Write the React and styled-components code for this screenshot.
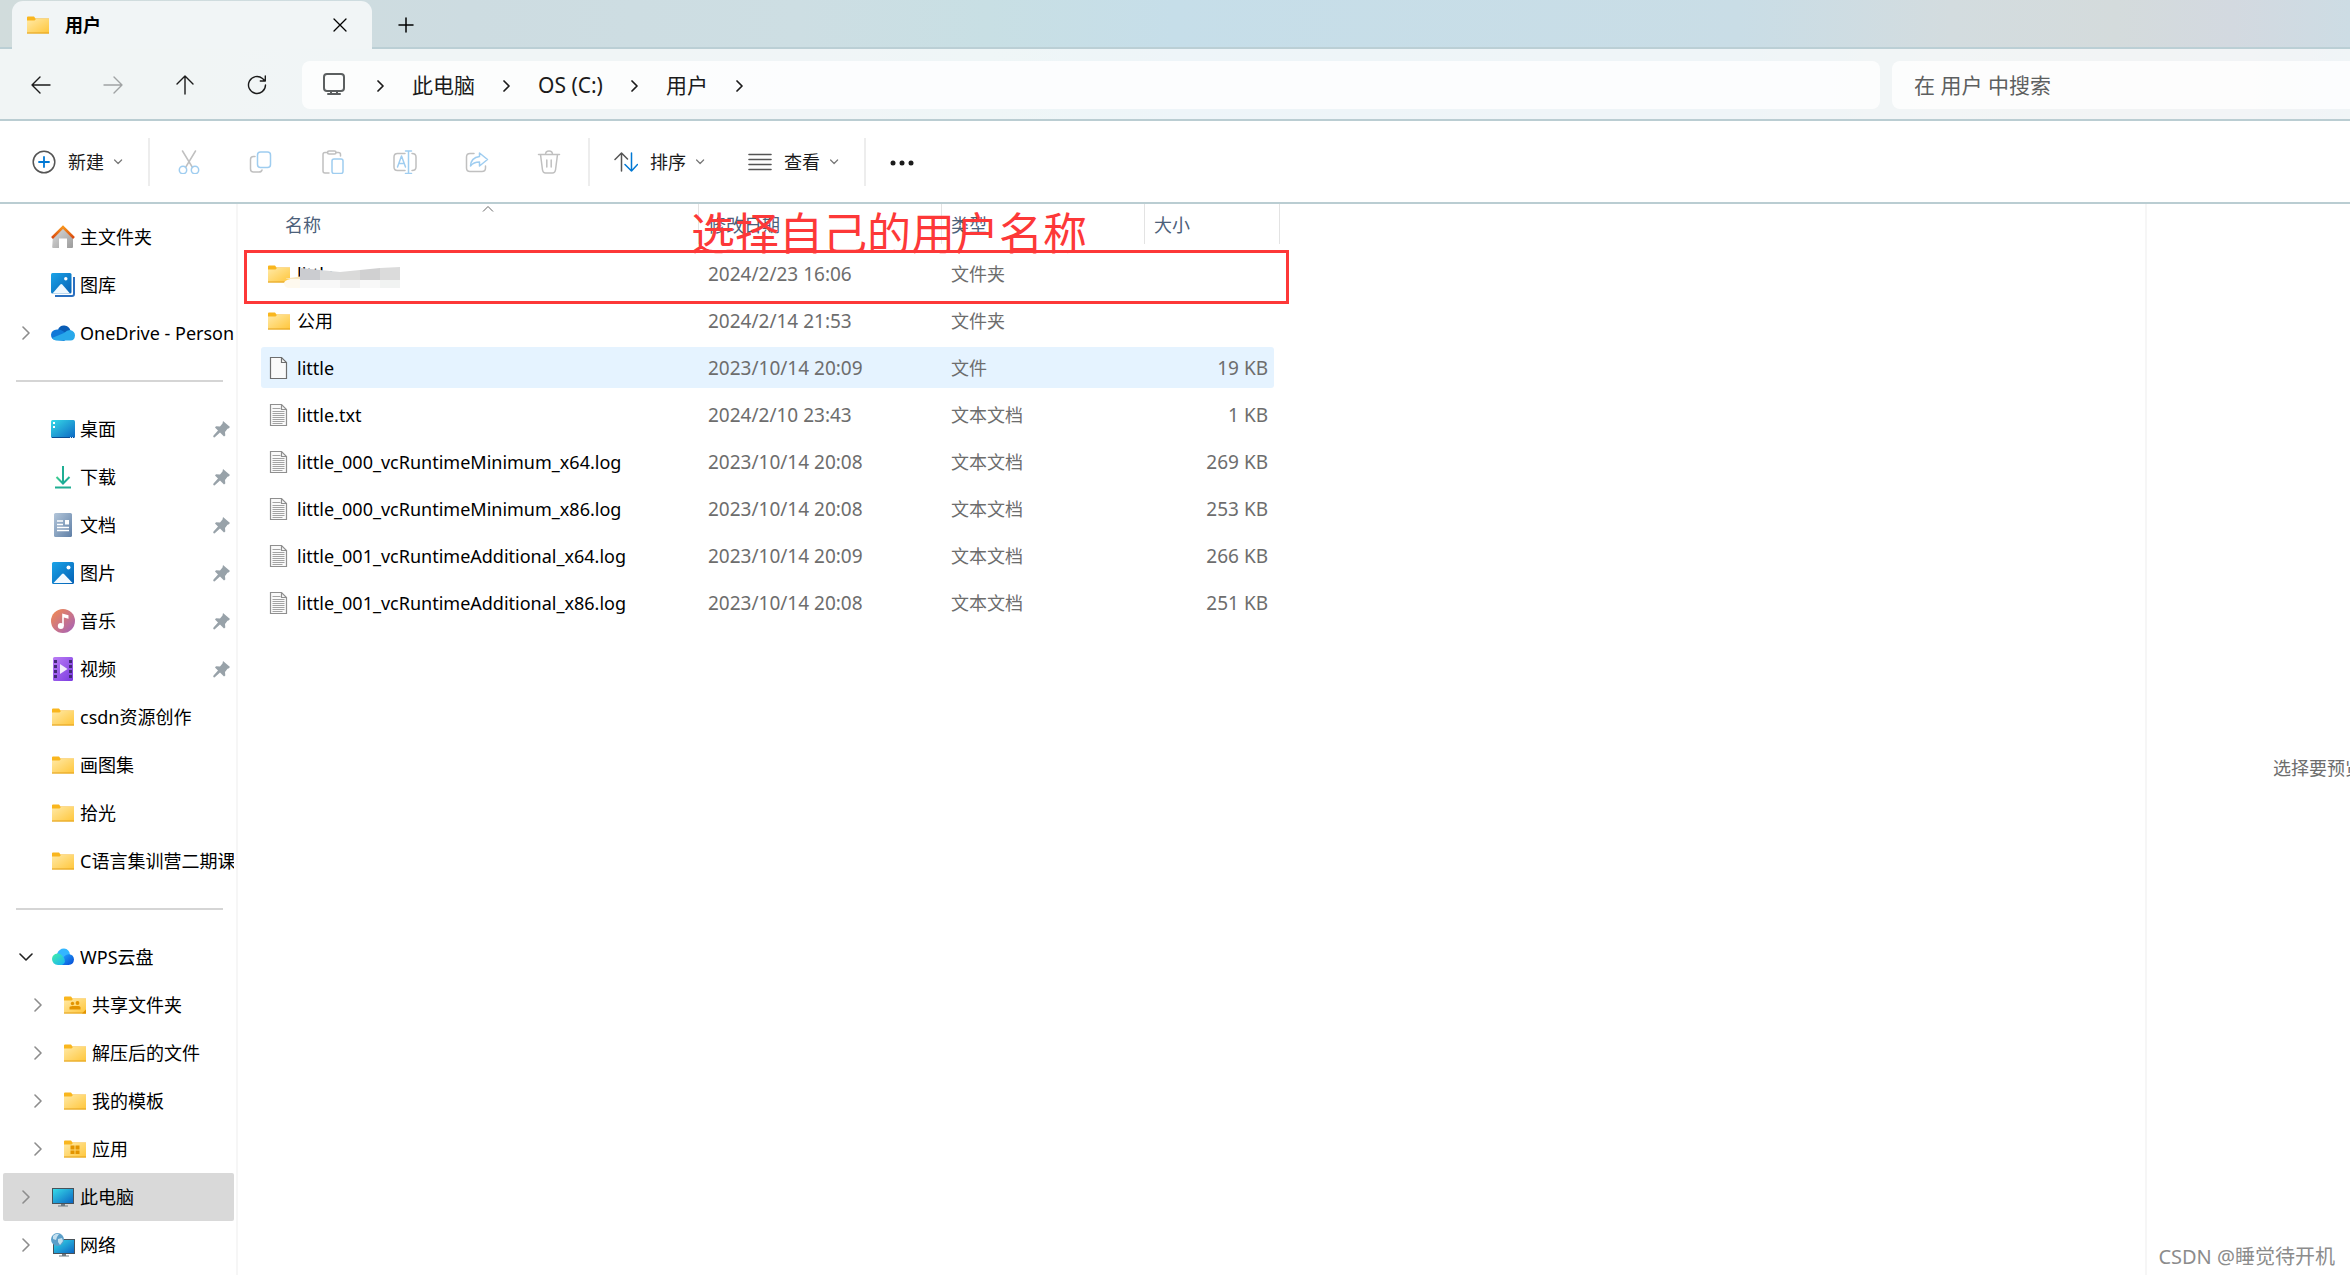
import { useState } from "react";
import styled, { createGlobalStyle, css } from "styled-components";

const GlobalStyle = createGlobalStyle`
  * {
    box-sizing: border-box;
  }

  body {
    margin: 0;
    background: #fff;
    color: #000;
    font: 18px/24px "Noto Sans", "Noto Sans CJK SC", sans-serif;
    overflow: hidden;
  }

  button, input {
    font: inherit;
    color: inherit;
    border: 0;
    padding: 0;
    background: none;
  }

  a {
    color: inherit;
    text-decoration: none;
  }

  svg {
    display: block;
    flex-shrink: 0;
  }
`;

const Window = styled.div`
  position: relative;
  display: flex;
  flex-direction: column;
  min-height: 100vh;
  overflow: hidden;
`;

const Chrome = styled.header`
  background: linear-gradient(
    90deg,
    #d1dcdc 0%,
    #cddce1 20%,
    #cddee3 34%,
    #c8dfe4 42%,
    #c6dee9 50%,
    #c9dde6 74%,
    #d3dcdf 83%,
    #d4dbdc 90%,
    #d3d9e0 95%,
    #cddce4 100%
  );
`;

const TabStrip = styled.div`
  display: flex;
  height: 49px;
  padding: 1px 0 0 12px;
  box-shadow: inset 0 -2px #bbcfd5;
`;

const Tab = styled.div`
  display: flex;
  align-items: center;
  width: 360px;
  padding: 0 24px 0 14px;
  border-radius: 11px 11px 0 0;
  background: #f1f5f6;
  font-weight: 700;

  > svg {
    margin-right: 15px;
  }

  button {
    margin-left: auto;
  }
`;

const NewTab = styled.button`
  width: 68px;
  display: grid;
  place-items: center;
`;

const NavBar = styled.nav`
  display: flex;
  align-items: center;
  height: 72px;
  padding: 2px 0 0 5px;
  background: rgba(255, 255, 255, 0.7);
  border-bottom: 2px solid #bacdd2;
`;

const IconButton = styled.button`
  display: grid;
  place-items: center;
  width: 72px;
  height: 48px;
  color: #1b1b1b;

  &:disabled {
    color: #a0a3a4;
  }
`;

const AddressBar = styled.ol`
  flex: 1;
  display: flex;
  align-items: center;
  gap: 28px;
  height: 48px;
  margin: 0 12px 0 9px;
  padding: 0 19px;
  border-radius: 8px;
  background: rgba(255, 255, 255, 0.8);
  color: #1b1b1b;
  list-style: none;
  font-size: 21px;

  li {
    display: flex;
    align-items: center;
    gap: 28px;
  }
`;

const Search = styled.input`
  width: 458px;
  height: 48px;
  padding: 0 22px;
  border-radius: 8px 0 0 8px;
  background: rgba(255, 255, 255, 0.8);
  font-size: 21px;
  outline: none;

  &::placeholder {
    color: #5d5f60;
    opacity: 1;
  }
`;

const Toolbar = styled.div`
  display: flex;
  align-items: center;
  height: 83px;
  padding-left: 11px;
  border-bottom: 2px solid #bacdd2;
`;

const MenuButton = styled.button`
  display: flex;
  align-items: center;
  gap: 12px;
  height: 48px;
  padding: 0 21px;
  color: #1b1b1b;

  svg + svg {
    margin-left: -2px;
  }
`;

const Divider = styled.span`
  width: 2px;
  height: 48px;
  margin: 0 3px;
  background: #ededed;
`;

const Body = styled.div`
  flex: 1;
  display: flex;
`;

const Sidebar = styled.aside`
  width: 238px;
  flex-shrink: 0;
  padding: 9px 2px 0 3px;
  border-right: 2px solid #f6f6f6;

  ul {
    margin: 0;
    padding: 0;
    list-style: none;
  }
`;

const TreeItem = styled.a`
  display: flex;
  align-items: center;
  height: 48px;
  padding: 0 4px 0 ${(props) => (props.$nested ? "28px" : "16px")};
  border-radius: 2px;
  overflow: hidden;
  white-space: nowrap;

  ${(props) =>
    props.$active &&
    css`
      background: #d9d9d9;
    `}
`;

const TreeArrow = styled.span`
  width: 14px;
  margin-right: 18px;
`;

const TreeLabel = styled.span`
  flex: 1;
  margin-left: 5px;
  margin-right: -4px;
  overflow: hidden;
`;

const TreeRule = styled.li`
  height: 48px;
  padding: 23px 11px 0 13px;

  &::after {
    content: "";
    display: block;
    height: 2px;
    background: #d5d5d5;
  }
`;

const Files = styled.main`
  position: relative;
  flex: 1;
  min-width: 0;
`;

const FileTable = styled.table`
  display: block;
  margin-left: 23px;

  thead,
  tbody {
    display: block;
  }

  tr {
    display: grid;
    grid-template-columns: 438px 243px 203px 135px;
    width: 1019px;
  }
`;

const Heading = styled.th`
  position: relative;
  height: 40px;
  padding: 9px 0 0 ${(props) => (props.$first ? "24px" : "9px")};
  border-right: 1px solid #e3e3e3;
  color: #4c607a;
  font-weight: 400;
  text-align: left;
`;

const SortMark = styled.svg`
  position: absolute;
  top: 1px;
  left: 221px;
`;

const FileRows = styled.tbody`
  padding-top: 9px;
`;

const FileRow = styled.tr`
  && {
    width: 1013px;
    grid-template-columns: 437px 243px 203px 130px;
  }
  height: 41px;
  margin-bottom: 6px;
  border-radius: 3px;
  background: ${(props) => (props.$active ? "#e5f3ff" : "transparent")};
`;

const Cell = styled.td`
  display: flex;
  align-items: center;
  justify-content: ${(props) => (props.$right ? "flex-end" : "flex-start")};
  padding: 0 6px 0 10px;
  color: #6d6d6d;
  font-size: ${(props) => (props.$numeric ? "19px" : "18px")};
`;

const NameCell = styled(Cell)`
  position: relative;
  gap: 6px;
  padding-left: 6px;
  color: #000;
`;

const Smudge = styled.svg`
  position: absolute;
  left: 22px;
  top: 13px;
`;

const Highlight = styled.div`
  position: absolute;
  top: 46px;
  left: 6px;
  width: 1045px;
  height: 54px;
  border: 3px solid #fd3838;
`;

const Note = styled.p`
  position: absolute;
  top: 3px;
  left: 453px;
  margin: 0;
  color: #fd3838;
  font-size: 44px;
  line-height: 52px;
  white-space: nowrap;
`;

const Preview = styled.aside`
  width: 205px;
  display: flex;
  align-items: center;
  padding: 56px 0 0 126px;
  border-left: 2px solid #f6f6f6;
  color: #6d6d6d;
  white-space: nowrap;
  overflow: hidden;

  p {
    margin: 0;
  }
`;

const Watermark = styled.span`
  position: absolute;
  right: 15px;
  bottom: 4px;
  color: #8c8c8c;
  font-size: 20px;
  line-height: 28px;
  text-shadow: -1px -1px #fff;
`;

/* icons */

const Defs = () => (
  <svg width="0" height="0" style={{ position: "absolute" }} aria-hidden="true">
    <defs>
      <linearGradient id="gold" x1="0" y1="0" x2="1" y2="1">
        <stop offset="0" stopColor="#ffe9a6" />
        <stop offset="1" stopColor="#ffc63a" />
      </linearGradient>
      <linearGradient id="blue" x1="0" y1="0" x2="1" y2="1">
        <stop offset="0" stopColor="#1ba4e8" />
        <stop offset="1" stopColor="#0560b4" />
      </linearGradient>
      <linearGradient id="cyan" x1="0" y1="0" x2="1" y2="1">
        <stop offset="0" stopColor="#37dbe8" />
        <stop offset="1" stopColor="#0b66c3" />
      </linearGradient>
      <linearGradient id="roof" x1="0" y1="0" x2="0" y2="1">
        <stop offset="0" stopColor="#f7941d" />
        <stop offset="1" stopColor="#d9480f" />
      </linearGradient>
      <linearGradient id="wall" x1="0" y1="0" x2="1" y2="1">
        <stop offset="0" stopColor="#dedede" />
        <stop offset="1" stopColor="#9b9b9b" />
      </linearGradient>
      <linearGradient id="green" x1="0" y1="0" x2="1" y2="1">
        <stop offset="0" stopColor="#3fcf8e" />
        <stop offset="1" stopColor="#0a9d9a" />
      </linearGradient>
      <linearGradient id="slate" x1="0" y1="0" x2="1" y2="1">
        <stop offset="0" stopColor="#b3c6da" />
        <stop offset="1" stopColor="#5f7fa6" />
      </linearGradient>
      <linearGradient id="music" x1="0" y1="0" x2="1" y2="1">
        <stop offset="0" stopColor="#f58b4c" />
        <stop offset="1" stopColor="#a360bd" />
      </linearGradient>
      <linearGradient id="violet" x1="0" y1="0" x2="1" y2="1">
        <stop offset="0" stopColor="#bb7df5" />
        <stop offset="1" stopColor="#7a3be0" />
      </linearGradient>
      <linearGradient id="mint" x1="0" y1="0" x2="1" y2="1">
        <stop offset="0" stopColor="#43f0a8" />
        <stop offset="1" stopColor="#12a9ff" />
      </linearGradient>
      <linearGradient id="deep" x1="0" y1="0" x2="1" y2="1">
        <stop offset="0" stopColor="#22a4ff" />
        <stop offset="1" stopColor="#0649d2" />
      </linearGradient>
    </defs>
  </svg>
);

const Line = ({ size = 24, width = size, height = size, children, ...rest }) => (
  <svg
    width={width}
    height={height}
    viewBox={`0 0 ${width} ${height}`}
    fill="none"
    stroke="currentColor"
    strokeWidth="1.5"
    strokeLinecap="round"
    strokeLinejoin="round"
    aria-hidden="true"
    {...rest}
  >
    {children}
  </svg>
);

const Folder = ({ children }) => (
  <svg width="24" height="24" viewBox="0 0 24 24" aria-hidden="true">
    <path d="M1 4.500q0-1 1-1h6l1.500 2H23v14.500H1z" fill="#f9b61e" />
    <path d="M1 7.500h7.500l1.500-1.500H23v14.500H1z" fill="url(#gold)" />
    <path d="M1 20h22" stroke="#e2a11c" />
    {children}
  </svg>
);

const SharedFolder = () => (
  <Folder>
    <g fill="#e39400">
      <circle cx="9.500" cy="10.500" r="1.700" />
      <circle cx="14.500" cy="10" r="1.900" />
      <path d="M6.500 16.500v-2q0-1.500 3-1.500h6q2 0 2 1.500v2z" />
      <path d="M19 20.500l4-4v4z" />
    </g>
  </Folder>
);

const AppsFolder = () => (
  <Folder>
    <path
      d="M7.500 8.500h4v4h-4zM12.500 8.500h4v4h-4zM7.500 13.500h4v3.500h-4zM12.500 13.500h4v3.500h-4z"
      fill="#e39400"
    />
  </Folder>
);

const Home = () => (
  <svg width="24" height="24" viewBox="0 0 24 24" aria-hidden="true">
    <path d="M2 10.500L12 2l10 8.500V22q0 1-1 1h-5v-9.500H8V23H2q-.8 0-.8-1z" fill="url(#wall)" />
    <path d="M1 13L12 2l11 11" stroke="url(#roof)" strokeWidth="2.600" fill="none" />
  </svg>
);

const Gallery = () => (
  <svg width="24" height="24" viewBox="0 0 24 24" aria-hidden="true">
    <path d="M23 4v17q0 2-2 2H4" stroke="#2a6fc0" strokeWidth="2" fill="none" />
    <rect width="20.500" height="20.500" rx="1.500" fill="url(#blue)" />
    <path d="M1.500 20.500l7.800-9q1-1 2 0l7.700 9z" fill="#eef8ff" />
    <circle cx="14.800" cy="5.700" r="1.700" fill="#fff" />
  </svg>
);

const Pictures = () => (
  <svg width="24" height="24" viewBox="0 0 24 24" aria-hidden="true">
    <rect x="1" y="1" width="22" height="22" rx="1.500" fill="url(#blue)" />
    <path d="M2.500 22l8.500-9q1-1 2 0l8.500 9z" fill="#f4faff" />
    <circle cx="17.500" cy="6.500" r="2" fill="#fff" />
  </svg>
);

const OneDrive = () => (
  <svg width="24" height="24" viewBox="0 0 24 24" aria-hidden="true">
    <path d="M7 8.500q2-4.500 6.500-4 4.500.5 6 5L14 14z" fill="#0a5cb5" />
    <path d="M5 19q-5-.5-5-5.300Q.5 9 6 8.500q3.500-.5 6.500 2L20 15l-7 5z" fill="#0f78d8" />
    <path d="M1 17l12-5q3-3 6-3 5 1 5 5.500-.3 5-4.500 5H5q-2.500-.3-4-2.500z" fill="#28a8ea" />
  </svg>
);

const Desktop = () => (
  <svg width="24" height="24" viewBox="0 0 24 24" aria-hidden="true">
    <rect y="3" width="24" height="18" rx="1.500" fill="url(#cyan)" />
    <path d="M1 20.500h22" stroke="#0b4c93" />
    <path d="M2 5h2v2H2zM2 9h2v2H2z" fill="#fff" />
    <path d="M19 20.500h4" stroke="#cde8ff" strokeDasharray="1 1" />
  </svg>
);

const Download = () => (
  <svg width="24" height="24" viewBox="0 0 24 24" fill="none" aria-hidden="true">
    <path d="M4 22.500h16M12 18.500V1" stroke="#1fae93" strokeWidth="2" />
    <path d="M5.500 12l6.500 6.500 6.500-6.500" stroke="url(#green)" strokeWidth="2" />
  </svg>
);

const Documents = () => (
  <svg width="24" height="24" viewBox="0 0 24 24" aria-hidden="true">
    <rect x="3" width="18" height="24" rx="1.500" fill="url(#slate)" />
    <path d="M6 8h6M6 11.500h6M6 14.500h12M6 17.500h12" stroke="#fff" strokeWidth="1.300" />
    <path d="M14 7h4v4.500h-4z" fill="#fff" />
  </svg>
);

const Music = () => (
  <svg width="24" height="24" viewBox="0 0 24 24" aria-hidden="true">
    <circle cx="12" cy="12" r="12" fill="url(#music)" />
    <circle cx="9.800" cy="17" r="3" fill="#fff" />
    <path d="M11.200 17V4.500l6.300 1.700v3.500l-4.700-1.200V17z" fill="#fff" />
  </svg>
);

const Video = () => (
  <svg width="24" height="24" viewBox="0 0 24 24" aria-hidden="true">
    <rect x="2" width="20" height="24" rx="1.500" fill="url(#violet)" />
    <path
      d="M3 3h3v3H3zM3 8h3v3H3zM3 13h3v3H3zM3 18h3v3H3zM18 3h3v3h-3zM18 8h3v3h-3zM18 13h3v3h-3zM18 18h3v3h-3z"
      fill="#432a78"
    />
    <path d="M9 7l7.500 5L9 17z" fill="#f2ecfb" />
  </svg>
);

const WpsCloud = () => (
  <svg width="24" height="24" viewBox="0 0 24 24" aria-hidden="true">
    <path d="M6 9q2-5.500 7-5.500 5.500.5 6 6.500l-6 6z" fill="#33b6ff" />
    <path d="M1 14q.3-5 5.500-5.500 3-.2 5 2.500l6 9H7q-5.700-.5-6-6z" fill="url(#mint)" />
    <path d="M12.500 12q2.500-3 5.500-2.800 4.800.6 5 5.300-.3 5-5.500 5.500H11q5-3 1.500-8z" fill="url(#deep)" />
  </svg>
);

const Computer = () => (
  <svg width="24" height="24" viewBox="0 0 24 24" aria-hidden="true">
    <rect x="1" y="3" width="22" height="16" fill="#48525a" />
    <rect x="2" y="4" width="20" height="14" fill="url(#cyan)" />
    <path d="M10 19h4v1.500h3V21.500H7V20.500h3z" fill="#6f7a82" />
  </svg>
);

const Network = () => (
  <svg width="24" height="24" viewBox="0 0 24 24" aria-hidden="true">
    <rect x="2" y="6" width="22" height="15" fill="#48525a" />
    <rect x="3" y="7" width="20" height="13" fill="url(#cyan)" />
    <path d="M11 21h4v1.500h3v1H8v-1h3z" fill="#6f7a82" />
    <circle cx="6.500" cy="6.500" r="6.500" fill="#5c9fc9" />
    <path d="M2 3q3-3 6-2l-2 3-1 3-3-1zM7 6l4-1 1 3-3 4-2-3z" fill="#c4e0ef" />
  </svg>
);

const Page = ({ lined }) => (
  <svg width="24" height="24" viewBox="0 0 24 24" aria-hidden="true">
    <path
      d="M3.500 1.500h11l5 5v16h-16z"
      fill="#fafafa"
      stroke={lined ? "#8f8f8f" : "#6e6e6e"}
      strokeWidth="1.200"
    />
    <path d="M14.500 1.500v5h5" fill="none" stroke={lined ? "#8f8f8f" : "#6e6e6e"} strokeWidth="1.200" />
    {lined && (
      <path
        d="M5.500 5.500h8M5.500 8.500h12M5.500 10.500h12M5.500 12.500h12M5.500 14.500h12M5.500 16.500h12M5.500 18.500h12M5.500 20.500h10"
        stroke="#a3a3a3"
      />
    )}
  </svg>
);

const Pin = () => (
  <svg width="17" height="17" viewBox="0 0 17 17" fill="#98a2a9" aria-hidden="true">
    <path d="M10 0l7 6-1.500 1.500-1 .2-2.500 3.300.3 3.500-1.300 1L7 11.500 1.500 16.500.2 16l.3-1.500L5 9.500 2 6.500l1-1.300 4 .2L9.500 2.500z" />
  </svg>
);

const Chevron = ({ dir = "right" }) => {
  const paths = {
    right: "M4 1l6 6-6 6",
    down: "M1 4l6 6 6-6",
  };
  return (
    <Line size={14} stroke={dir === "down" ? "#222" : "#8d8d8d"} strokeWidth="1.600">
      <path d={paths[dir]} />
    </Line>
  );
};

const CrumbArrow = () => (
  <Line width={7} height={14} strokeWidth="1.700">
    <path d="M1 3l5 5-5 5" />
  </Line>
);

const Caret = () => (
  <Line width={10} height={6} stroke="#777" strokeWidth="1.200">
    <path d="M.6 1l3.500 3.500L7.600 1" />
  </Line>
);

const editTools = [
  {
    name: "剪切",
    icon: (
      <>
        <path d="M5.500 1l10 16.500M18.500 1l-10 16.500" />
        <g stroke="#9fcdf0">
          <circle cx="6" cy="20" r="3.700" />
          <circle cx="18" cy="20" r="3.700" />
        </g>
      </>
    ),
  },
  {
    name: "复制",
    icon: (
      <>
        <path d="M6 6.500H4.500q-3 0-3 3V19q0 3 3 3H10q2.500 0 3-2" />
        <rect x="8.500" y="2" width="13" height="15.500" rx="3" stroke="#9fcdf0" />
      </>
    ),
  },
  {
    name: "粘贴",
    icon: (
      <>
        <path d="M6.500 2.500H4q-2 0-2 2V21q0 2 2 2h4M15 2.500h2.500q2 0 2 2V6" />
        <rect x="6.500" y="1" width="8.500" height="3" rx="1.500" />
        <rect x="11" y="9" width="11" height="14.500" rx="2" stroke="#9fcdf0" />
      </>
    ),
  },
  {
    name: "重命名",
    icon: (
      <>
        <path d="M12 3.500H4.500Q1 3.500 1 7v10q0 3.500 3.500 3.500H12M19 3.500q4 0 4 3.500v10q0 3.500-4 3.500" />
        <path d="M4.500 17l4-11 4 11M6 13.500h5M12.500 1h6M12.500 23.500h6M15.500 1v22.500" stroke="#9fcdf0" />
      </>
    ),
  },
  {
    name: "共享",
    icon: (
      <>
        <path d="M9 3.500H5Q1.500 3.500 1.500 7v11q0 3.500 3.500 3.500h12q3.500 0 3.500-3.500v-2" />
        <path
          d="M14.500 3l8 6.500-8 6.500v-4q-6 0-9 4Q6 7.500 14.500 6.500z"
          stroke="#9fcdf0"
        />
      </>
    ),
  },
  {
    name: "删除",
    icon: (
      <path d="M1.500 4.500h21M8.500 4.500q0-3.500 3.500-3.500t3.500 3.500M3.500 4.500L5.500 20q.5 3 3 3h7q2.500 0 3-3l2-15.500M9.800 10v7M14.200 10v7" />
    ),
  },
];

const sidebar = [
  { label: "主文件夹", icon: Home },
  { label: "图库", icon: Gallery },
  { label: "OneDrive - Personal", icon: OneDrive, arrow: "right" },
  null,
  { label: "桌面", icon: Desktop, pinned: true },
  { label: "下载", icon: Download, pinned: true },
  { label: "文档", icon: Documents, pinned: true },
  { label: "图片", icon: Pictures, pinned: true },
  { label: "音乐", icon: Music, pinned: true },
  { label: "视频", icon: Video, pinned: true },
  { label: "csdn资源创作", icon: Folder },
  { label: "画图集", icon: Folder },
  { label: "拾光", icon: Folder },
  { label: "C语言集训营二期课", icon: Folder },
  null,
  { label: "WPS云盘", icon: WpsCloud, arrow: "down" },
  { label: "共享文件夹", icon: SharedFolder, arrow: "right", nested: true },
  { label: "解压后的文件", icon: Folder, arrow: "right", nested: true },
  { label: "我的模板", icon: Folder, arrow: "right", nested: true },
  { label: "应用", icon: AppsFolder, arrow: "right", nested: true },
  { label: "此电脑", icon: Computer, arrow: "right", active: true },
  { label: "网络", icon: Network, arrow: "right" },
];

const files = [
  { name: "little", date: "2024/2/23 16:06", type: "文件夹", hidden: true },
  { name: "公用", date: "2024/2/14 21:53", type: "文件夹" },
  { name: "little", date: "2023/10/14 20:09", type: "文件", size: "19 KB" },
  { name: "little.txt", date: "2024/2/10 23:43", type: "文本文档", size: "1 KB" },
  { name: "little_000_vcRuntimeMinimum_x64.log", date: "2023/10/14 20:08", type: "文本文档", size: "269 KB" },
  { name: "little_000_vcRuntimeMinimum_x86.log", date: "2023/10/14 20:08", type: "文本文档", size: "253 KB" },
  { name: "little_001_vcRuntimeAdditional_x64.log", date: "2023/10/14 20:09", type: "文本文档", size: "266 KB" },
  { name: "little_001_vcRuntimeAdditional_x86.log", date: "2023/10/14 20:08", type: "文本文档", size: "251 KB" },
];

const NameSmudge = () => (
  <Smudge width="118" height="24" viewBox="0 0 118 24" aria-hidden="true">
    <path d="M1 17q0-4 14-5l3 0v10H5q-4-1-4-5z" fill="#fef9ee" />
    <path d="M3 12.500l14-2v2.500H3z" fill="#f8e6bd" />
    <path d="M17 13h100v9H17z" fill="#f8f8f8" />
    <path d="M57 13h20v9H57z" fill="#f0f0f0" />
    <path d="M97 13h20v9H97z" fill="#f1f3f2" />
    <path d="M17 2l20 2v10H17z" fill="#cbccd0" />
    <path d="M37 4l20 2v8H37z" fill="#dadbdc" />
    <path d="M57 6l20-2v10H57z" fill="#dadad9" />
    <path d="M77 4l20-2v12H77z" fill="#d0d0d1" />
    <path d="M97 2l20-1v13H97z" fill="#dbdbdb" />
  </Smudge>
);

const fileIcon = ({ type }) => {
  if (type === "文件夹") return <Folder />;
  return <Page lined={type === "文本文档"} />;
};

export default function App() {
  const [query, setQuery] = useState("");
  const [selected, setSelected] = useState(2);

  return (
    <Window>
      <GlobalStyle />
      <Defs />
      <Chrome>
        <TabStrip>
          <Tab>
            <Folder />
            用户
            <button aria-label="关闭">
              <Line size={16} strokeWidth="1.300">
                <path d="M2 2l12 12M14 2L2 14" />
              </Line>
            </button>
          </Tab>
          <NewTab aria-label="新标签页">
            <Line size={16} strokeWidth="1.500">
              <path d="M8 1v14M1 8h14" />
            </Line>
          </NewTab>
        </TabStrip>
        <NavBar>
          <IconButton aria-label="后退">
            <Line size={20} strokeWidth="1.400">
              <path d="M19 10H1M9 2L1 10l8 8" />
            </Line>
          </IconButton>
          <IconButton aria-label="前进" disabled>
            <Line size={20} strokeWidth="1.400">
              <path d="M1 10h18M11 2l8 8-8 8" />
            </Line>
          </IconButton>
          <IconButton aria-label="向上">
            <Line size={20} strokeWidth="1.400">
              <path d="M10 19V1M2 9l8-8 8 8" />
            </Line>
          </IconButton>
          <IconButton aria-label="刷新">
            <Line size={20} strokeWidth="1.400">
              <path d="M18.500 10a8.500 8.500 0 1 1-3-6.500l2.500 2.500M18.300 1v5h-5" />
            </Line>
          </IconButton>
          <AddressBar>
            <li>
              <Line width={28} height={24} stroke="#5b5f60" strokeWidth="2">
                <rect x="3" y="1" width="20" height="17" rx="3" />
                <path d="M10 18v3M16 18v3M7 21h12" />
              </Line>
              <CrumbArrow />
            </li>
            <li>
              <a href="#pc">此电脑</a>
              <CrumbArrow />
            </li>
            <li>
              <a href="#c">OS (C:)</a>
              <CrumbArrow />
            </li>
            <li>
              <a href="#users">用户</a>
              <CrumbArrow />
            </li>
          </AddressBar>
          <Search
            type="text"
            aria-label="搜索"
            placeholder="在 用户 中搜索"
            value={query}
            onChange={(e) => setQuery(e.target.value)}
          />
        </NavBar>
      </Chrome>

      <Toolbar>
        <MenuButton>
          <Line stroke="#555">
            <circle cx="12" cy="12" r="10.800" />
            <path d="M12 7v10M7 12h10" stroke="#0078d4" strokeWidth="1.800" />
          </Line>
          新建
          <Caret />
        </MenuButton>
        <Divider />
        {editTools.map((tool) => (
          <IconButton key={tool.name} aria-label={tool.name} disabled>
            <Line stroke="#c0c0c0">{tool.icon}</Line>
          </IconButton>
        ))}
        <Divider />
        <MenuButton>
          <Line stroke="#555">
            <path d="M7.500 21V3M1 9.500L7.500 3l6 6" />
            <path d="M17.500 3v18M11 14.500l6.500 6.500 6-6.500" stroke="#0078d4" />
          </Line>
          排序
          <Caret />
        </MenuButton>
        <MenuButton>
          <Line stroke="#555" strokeWidth="1.600">
            <path d="M1 4.500h22M1 9.500h22M1 14.500h22M1 19.500h22" />
          </Line>
          查看
          <Caret />
        </MenuButton>
        <Divider />
        <MenuButton aria-label="更多">
          <svg width="24" height="8" viewBox="0 0 24 8" fill="#1b1b1b">
            <circle cx="3" cy="5" r="2.500" />
            <circle cx="12" cy="5" r="2.500" />
            <circle cx="21" cy="5" r="2.500" />
          </svg>
        </MenuButton>
      </Toolbar>

      <Body>
        <Sidebar>
          <ul>
            {sidebar.map((item, i) => {
              if (!item) return <TreeRule key={i} />;
              const Icon = item.icon;
              return (
                <li key={i}>
                  <TreeItem href={`#${i}`} $nested={item.nested} $active={item.active}>
                    <TreeArrow>{item.arrow && <Chevron dir={item.arrow} />}</TreeArrow>
                    <Icon />
                    <TreeLabel>{item.label}</TreeLabel>
                    {item.pinned && <Pin />}
                  </TreeItem>
                </li>
              );
            })}
          </ul>
        </Sidebar>

        <Files>
          <FileTable>
            <thead>
              <tr>
                <Heading $first>
                  名称
                  <SortMark width="12" height="8" viewBox="0 0 12 8" fill="none" stroke="#666">
                    <path d="M1 6.500l5-5 5 5" />
                  </SortMark>
                </Heading>
                <Heading>修改日期</Heading>
                <Heading>类型</Heading>
                <Heading>大小</Heading>
              </tr>
            </thead>
            <FileRows>
              {files.map((file, i) => (
                <FileRow key={i} $active={i === selected} onClick={() => setSelected(i)}>
                  <NameCell>
                    {fileIcon(file)}
                    {file.name}
                    {file.hidden && <NameSmudge />}
                  </NameCell>
                  <Cell $numeric>{file.date}</Cell>
                  <Cell>{file.type}</Cell>
                  <Cell $numeric $right>{file.size}</Cell>
                </FileRow>
              ))}
            </FileRows>
          </FileTable>
          <Highlight />
          <Note>选择自己的用户名称</Note>
        </Files>

        <Preview>
          <p>选择要预览的文件。</p>
        </Preview>
      </Body>
      <Watermark>CSDN @睡觉待开机</Watermark>
    </Window>
  );
}
